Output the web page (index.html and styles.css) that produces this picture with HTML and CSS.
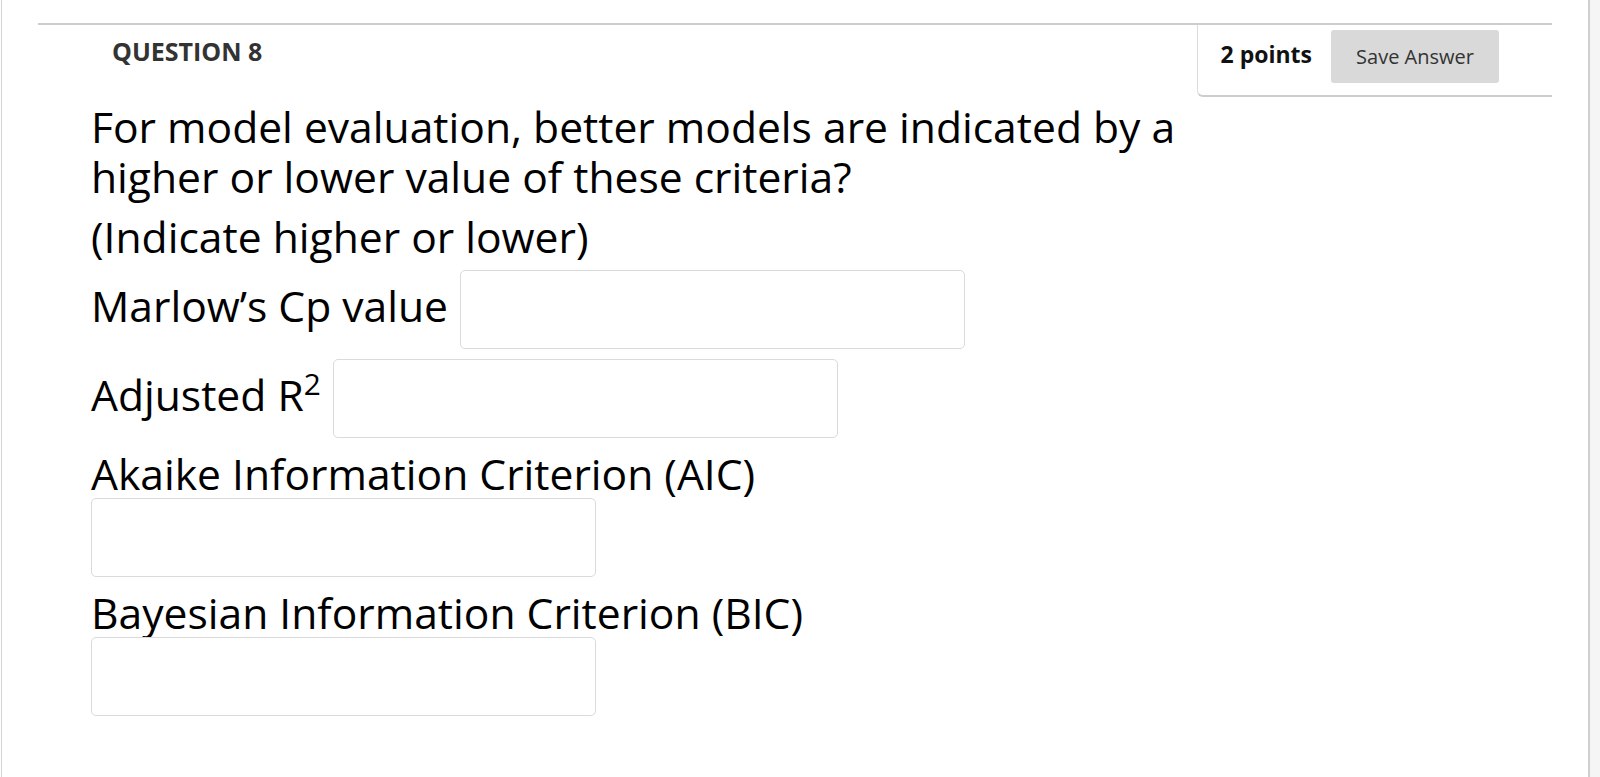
FILE: index.html
```html
<!DOCTYPE html>
<html lang="en">
<head>
<meta charset="utf-8">
<title>Question 8</title>
<link rel="stylesheet" href="styles.css">
</head>
<body>
<div class="page">
  <main class="main">
    <section class="question">
      <header class="q-header">
        <h2 class="q-title">QUESTION 8</h2>
        <div class="q-points">
          <span class="points">2 points</span>
          <button class="save" type="button">Save Answer</button>
        </div>
      </header>
      <div class="q-body">
        <p class="q-text">For model evaluation, better models are indicated by a higher or lower value of these criteria?</p>
        <p class="q-text">(Indicate higher or lower)</p>
        <div class="row"><span class="label">Marlow’s Cp value</span><input class="answer" type="text"></div>
        <div class="row"><span class="label">Adjusted R<sup>2</sup></span><input class="answer" type="text"></div>
        <div class="stack"><span class="label">Akaike Information Criterion (AIC)</span><input class="answer" type="text"></div>
        <div class="stack"><span class="label">Bayesian Information Criterion (BIC)</span><input class="answer" type="text"></div>
      </div>
    </section>
  </main>
  <aside class="side"></aside>
</div>
</body>
</html>
```

FILE: styles.css
```css
html, body {
  margin: 0;
  padding: 0;
  background: #fff;
}
body {
  font-family: "Open Sans", "Noto Sans", sans-serif;
  color: #000;
}
.page {
  display: flex;
  min-height: 777px;
  padding-left: 1px;
}
.main {
  flex: 1;
  border-left: 1px solid #d4d4d4;
  padding: 23px 36px 0 36px;
}
.side {
  width: 10px;
  border-left: 2px solid #cfcfcf;
  background: #f5f5f5;
}
.q-header {
  display: flex;
  justify-content: space-between;
  align-items: flex-start;
  border-top: 2px solid #cdcdcd;
}
.q-title {
  margin: 9px 0 0 74px;
  font-size: 25px;
  line-height: 34px;
  font-weight: 700;
  color: #333;
}
.q-points {
  display: flex;
  align-items: center;
  gap: 19px;
  padding: 5px 53px 12px 23px;
  border-left: 1px solid #dcdcdc;
  border-bottom: 2px solid #cdcdcd;
  border-bottom-left-radius: 6px;
  white-space: nowrap;
}
.points {
  font-size: 23px;
  font-weight: 700;
  color: #111;
  padding-bottom: 5px;
}
.save {
  flex-shrink: 0;
  height: 53px;
  width: 168px;
  border: none;
  border-radius: 3px;
  background: #d9d9d9;
  color: #333;
  font-family: "Open Sans", sans-serif;
  font-size: 20px;
  padding: 0;
}
.q-body {
  padding: 4px 0 0 53px;
  width: 1110px;
  display: flex;
  flex-direction: column;
  gap: 10px;
  font-size: 42.6px;
  line-height: 50px;
}
.q-text {
  margin: 0;
}
.q-text + .row {
  margin-top: -1px;
}
.row {
  display: flex;
  align-items: center;
  gap: 12px;
}
.row .label {
  padding-bottom: 9px;
}
.stack {
  display: flex;
  flex-direction: column;
  align-items: flex-start;
}
.label sup {
  font-size: 0.7em;
  line-height: 0;
  vertical-align: 0.55em;
}
.answer {
  box-sizing: border-box;
  width: 505px;
  height: 79px;
  border: 1px solid #dadada;
  border-radius: 5px;
  background: #fff;
  margin: 0;
}
```
